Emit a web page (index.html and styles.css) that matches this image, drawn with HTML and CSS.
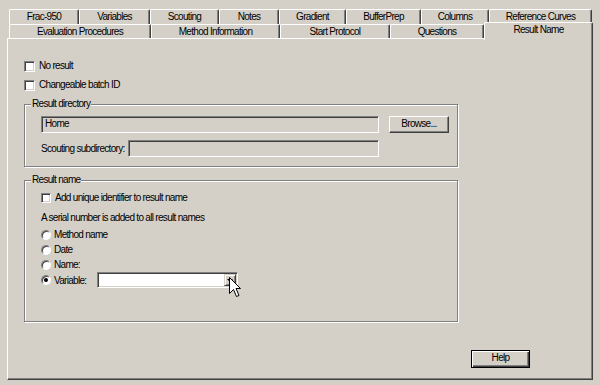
FILE: index.html
```html
<!DOCTYPE html>
<html>
    <head>
        <title>Result Name</title>
        <link rel="stylesheet" href="styles.css">
    </head>
<body>
    <div class="dialog">
        <div class="tab-row back">
            <div class="tab">Frac-950</div>
            <div class="tab">Variables</div>
            <div class="tab">Scouting</div>
            <div class="tab">Notes</div>
            <div class="tab">Gradient</div>
            <div class="tab">BufferPrep</div>
            <div class="tab">Columns</div>
            <div class="tab">Reference Curves</div>
        </div>
        <div class="tab-row front">
            <div class="tab">Evaluation Procedures</div>
            <div class="tab">Method Information</div>
            <div class="tab">Start Protocol</div>
            <div class="tab">Questions</div>
            <div class="tab selected">Result Name</div>
        </div>

        <div class="pane">
            <div class="options">
                <label class="check"><span class="box"></span>No result</label>
                <label class="check"><span class="box"></span>Changeable batch ID</label>
            </div>

            <fieldset class="group directory">
                <legend>Result directory</legend>
                <div class="group-body">
                    <div class="field-row">
                        <div class="textbox home">Home</div>
                        <div class="button browse">Browse...</div>
                    </div>
                    <div class="field-row">
                        <span class="field-label">Scouting subdirectory:</span>
                        <div class="textbox subdir"></div>
                    </div>
                </div>
            </fieldset>

            <fieldset class="group names">
                <legend>Result name</legend>
                <div class="group-body">
                    <label class="check small"><span class="box"></span>Add unique identifier to result name</label>
                    <p class="note">A serial number is added to all result names</p>
                    <label class="radio-row"><span class="radio"></span>Method name</label>
                    <label class="radio-row"><span class="radio"></span>Date</label>
                    <label class="radio-row"><span class="radio"></span>Name:</label>
                    <div class="radio-row variable">
                        <span class="radio checked"></span>
                        <span class="radio-label">Variable:</span>
                        <div class="combo">
                            <span class="drop"><span class="arrow"></span></span>
                            <svg class="cursor" width="12" height="20" viewBox="0 0 12 20">
                                <path d="M0.5 0.5 L0.5 16.5 L4.5 12.5 L7.5 19.5 L10 18.5 L7 11.5 L11.5 11.5 Z" fill="#fff" stroke="#000" stroke-width="1"/>
                            </svg>
                        </div>
                    </div>
                </div>
            </fieldset>

            <div class="footer">
                <div class="button default">Help</div>
            </div>
        </div>
    </div>
</body>
</html>
```

FILE: styles.css
```css
body {
    margin: 0;
    width: 600px;
    height: 385px;
    overflow: hidden;
    background-color: #d4d0c8;
    font-family: "Liberation Sans", Arial, sans-serif;
    font-size: 10px;
    letter-spacing: -0.7px;
    color: #000;
}

.dialog {
    padding: 9px 0 0 7px;
}

/* tabs */

.tab-row {
    display: flex;
    margin-left: 2px;
}

.tab-row.back {
    height: 15px;
}

.tab-row.front {
    height: 14px;
}

.tab {
    box-sizing: border-box;
    flex: none;
    height: 100%;
    border-top: 1px solid #fff;
    border-left: 1px solid #fff;
    border-right: 1px solid #404040;
    border-radius: 2px 2px 0 0;
    box-shadow: inset -1px 0 0 #808080;
    background-color: #d4d0c8;
    text-align: center;
    line-height: 14px;
    white-space: nowrap;
}

.back .tab:nth-child(1) { width: 70px; }
.back .tab:nth-child(2) { width: 71px; }
.back .tab:nth-child(3) { width: 69px; }
.back .tab:nth-child(4) { width: 60px; }
.back .tab:nth-child(5) { width: 67px; }
.back .tab:nth-child(6) { width: 75px; }
.back .tab:nth-child(7) { width: 68px; }
.back .tab:nth-child(8) { width: 103px; }

.front .tab:nth-child(1) { width: 142px; }
.front .tab:nth-child(2) { width: 129px; }
.front .tab:nth-child(3) { width: 110px; }
.front .tab:nth-child(4) { width: 94px; }

.front .tab.selected {
    position: relative;
    z-index: 1;
    width: 109px;
    height: 18px;
    margin-top: -2px;
}

/* page */

.pane {
    box-sizing: border-box;
    width: 586px;
    height: 342px;
    border: 1px solid;
    border-color: #fff #404040 #404040 #fff;
    box-shadow: inset -1px -1px 0 #808080;
}

.options {
    display: flex;
    flex-direction: column;
    gap: 5px;
    padding: 20px 0 0 16px;
}

.check {
    display: flex;
    align-items: center;
    height: 14px;
    line-height: 14px;
    white-space: nowrap;
}

.box {
    box-sizing: border-box;
    width: 11px;
    height: 11px;
    margin-right: 4px;
    background-color: #fff;
    border: 1px solid;
    border-color: #808080 #fff #fff #808080;
    box-shadow: inset 1px 1px 0 #404040, inset -1px -1px 0 #d4d0c8;
}

.check.small .box {
    width: 10px;
    height: 10px;
    margin-right: 4px;
}

.group {
    box-sizing: border-box;
    width: 434px;
    margin: 0 0 0 16px;
    padding: 6px 0 9px 6px;
    min-width: 0;
    border: 1px solid #808080;
    box-shadow: 1px 1px 0 #fff, inset 1px 1px 0 #fff;
}

.group legend {
    padding: 0 1px;
    line-height: 12px;
    background-color: #d4d0c8;
}

.group.directory {
    margin-top: 6px;
}

.group.names {
    margin-top: 7px;
    padding-top: 5px;
    padding-bottom: 33px;
}

.group-body {
    display: flex;
    flex-direction: column;
    padding-left: 10px;
}

.directory .group-body {
    gap: 7px;
}

.field-row {
    display: flex;
    align-items: center;
    height: 17px;
}

.field-label {
    width: 87px;
    white-space: nowrap;
}

.textbox {
    box-sizing: border-box;
    height: 17px;
    padding-left: 3px;
    line-height: 14px;
    border: 1px solid;
    border-color: #808080 #fff #fff #808080;
    box-shadow: inset 1px 1px 0 #404040, inset -1px -1px 0 #d4d0c8;
}

.textbox.home {
    width: 338px;
}

.textbox.subdir {
    width: 251px;
}

.button {
    box-sizing: border-box;
    height: 17px;
    text-align: center;
    line-height: 14px;
    border: 1px solid;
    border-color: #fff #404040 #404040 #fff;
    box-shadow: inset -1px -1px 0 #808080;
}

.button.browse {
    width: 60px;
    margin-left: 10px;
}

.note {
    margin: 6px 0 0 0;
    height: 14px;
    line-height: 14px;
    white-space: nowrap;
}

.radio-row {
    display: flex;
    align-items: center;
    height: 15px;
}

.note + .radio-row {
    margin-top: 2px;
}

.radio-row.variable {
    height: 16px;
}

.radio {
    position: relative;
    box-sizing: border-box;
    width: 10px;
    height: 10px;
    margin-right: 3px;
    border-radius: 50%;
    background-color: #fff;
    border: 1px solid;
    border-color: #808080 #fff #fff #808080;
    box-shadow: inset 1px 1px 0 #404040;
}

.radio.checked::after {
    content: "";
    position: absolute;
    left: 2px;
    top: 2px;
    width: 4px;
    height: 4px;
    border-radius: 50%;
    background-color: #000;
}

.radio-label {
    width: 43px;
}

.combo {
    position: relative;
    box-sizing: border-box;
    width: 141px;
    height: 16px;
    background-color: #fff;
    border: 1px solid;
    border-color: #808080 #fff #fff #808080;
    box-shadow: inset 1px 1px 0 #404040, inset -1px -1px 0 #d4d0c8;
    display: flex;
    justify-content: flex-end;
    padding: 1px;
}

.drop {
    box-sizing: border-box;
    width: 12px;
    height: 12px;
    display: flex;
    align-items: center;
    justify-content: center;
    background-color: #d4d0c8;
    border: 1px solid;
    border-color: #d4d0c8 #404040 #404040 #d4d0c8;
    box-shadow: inset 1px 1px 0 #fff, inset -1px -1px 0 #808080;
}

.arrow {
    width: 0;
    height: 0;
    border-left: 3px solid transparent;
    border-right: 3px solid transparent;
    border-top: 3px solid #000;
}

.cursor {
    position: absolute;
    left: 131px;
    top: 4px;
}

.footer {
    display: flex;
    justify-content: flex-end;
    margin-top: 28px;
    padding-right: 62px;
}

.button.default {
    width: 59px;
    height: 18px;
    border: 1px solid #000;
    box-shadow: inset 1px 1px 0 #fff, inset -1px -1px 0 #404040, inset -2px -2px 0 #808080;
}
```
